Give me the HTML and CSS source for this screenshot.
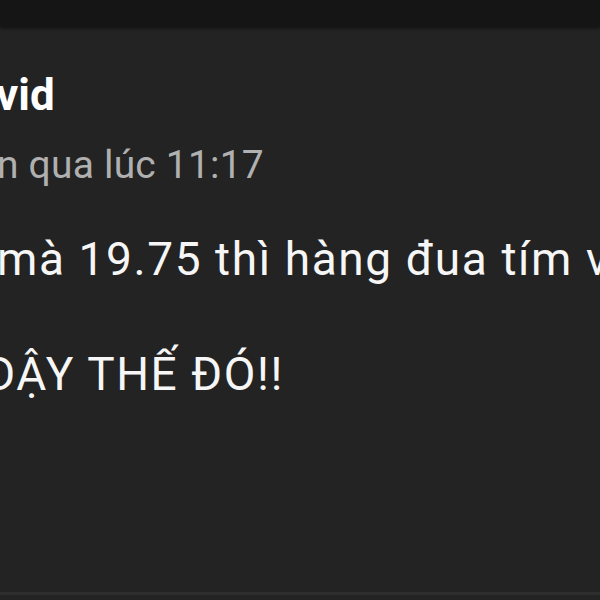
FILE: index.html
```html
<!DOCTYPE html>
<html lang="vi">
<head>
<meta charset="utf-8">
<link rel="stylesheet" href="styles.css">
</head>
<body>
<div class="topbar"></div>
<main class="post">
  <div class="name">vid</div>
  <div class="meta">n qua lúc 11:17</div>
  <div class="body">
    <div class="line l1">mà 19.75 thì hàng đua tím vẫn</div>
    <div class="line blank">&nbsp;</div>
    <div class="line l2">DẬY THẾ ĐÓ!!</div>
  </div>
</main>
<div class="bottomline"></div>
</body>
</html>
```
FILE: styles.css
```css
html, body {
  margin: 0;
  padding: 0;
  width: 600px;
  height: 600px;
  overflow: hidden;
  background: #232323;
  font-family: Roboto, "Noto Sans", sans-serif;
}
body {
  display: flex;
  flex-direction: column;
}
.topbar {
  height: 27px;
  background: #151515;
  box-shadow: 0 1px 3px rgba(0,0,0,0.6);
  flex: none;
}
.post {
  flex: 1;
  padding-top: 41px;
  overflow: hidden;
  white-space: nowrap;
}
.name {
  font-size: 44px;
  line-height: 54px;
  font-weight: 700;
  color: #ffffff;
  margin-left: -4px;
}
.meta {
  margin-top: 18px;
  font-size: 39px;
  line-height: 50px;
  color: #b0b0b0;
  margin-left: -3px;
  letter-spacing: 0.2px;
}
.body {
  margin-top: 41px;
  font-size: 46px;
  line-height: 57.5px;
  color: #f6f6f6;
  letter-spacing: 1.6px;
}
.l1 { margin-left: -3px; }
.l2 { margin-left: -15px; }
.bottomline {
  height: 3px;
  background: #2e2e2e;
  margin-bottom: 5px;
  flex: none;
}
```
